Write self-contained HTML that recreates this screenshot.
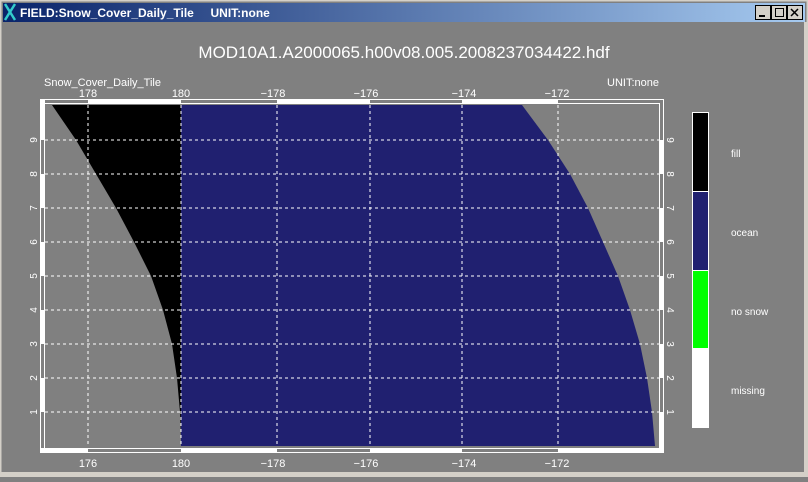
<!DOCTYPE html>
<html><head><style>
body{margin:0;width:808px;height:477px;overflow:hidden;background:#808080;font-family:"Liberation Sans",sans-serif}
</style></head><body>
<svg width="808" height="477" xmlns="http://www.w3.org/2000/svg" font-family="Liberation Sans, sans-serif">
<defs><linearGradient id="tb" x1="0" x2="1"><stop offset="0" stop-color="#0a246a"/><stop offset="1" stop-color="#a6caf0"/></linearGradient></defs>
<rect width="808" height="477" fill="#808080"/>
<rect x="0" y="0" width="808" height="477" fill="none" stroke="#d4d0c8" stroke-width="3"/>
<rect x="804" y="22" width="4" height="455" fill="#d4d0c8"/>
<rect x="0" y="472" width="808" height="5" fill="#d4d0c8"/>
<rect x="3" y="3" width="802" height="19" fill="url(#tb)"/>
<path d="M5 4 L15 20 M15 4 L5 20" stroke="#3cc" stroke-width="2.5"/>
<text x="20" y="17" fill="#fff" font-size="12" font-weight="bold">FIELD:Snow_Cover_Daily_Tile&#160;&#160;&#160;&#160;&#160;UNIT:none</text>
<g fill="#d4d0c8" stroke="#000" stroke-width="1"><rect x="755.5" y="5.5" width="15" height="14"/><rect x="771.5" y="5.5" width="15" height="14"/><rect x="787.5" y="5.5" width="15" height="14"/></g>
<path d="M759 16h6" stroke="#000" stroke-width="2"/><rect x="775.5" y="8.5" width="8" height="8" fill="none" stroke="#000"/><path d="M791 9l7 7M798 9l-7 7" stroke="#000" stroke-width="1.5"/>
<text x="404" y="58" fill="#fff" font-size="17" text-anchor="middle">MOD10A1.A2000065.h00v08.005.2008237034422.hdf</text>
<text x="44" y="86" fill="#fff" font-size="11">Snow_Cover_Daily_Tile</text>
<text x="659" y="86" fill="#fff" font-size="11" text-anchor="end">UNIT:none</text>
<g fill="#fff" font-size="11" text-anchor="middle">
<text x="88" y="97">178</text><text x="181" y="97">180</text><text x="273" y="97">−178</text><text x="366" y="97">−176</text><text x="464" y="97">−174</text><text x="557" y="97">−172</text>
<text x="88" y="467">176</text><text x="181" y="467">180</text><text x="273" y="467">−178</text><text x="366" y="467">−176</text><text x="464" y="467">−174</text><text x="557" y="467">−172</text>
</g>
<path d="M52 105 L181 105 L181 440 L180 412 L177 378 L172 344 L163 310 L151 276 L134 242 L116 208 L96 174 L76 140 Z" fill="#000"/>
<path d="M181 105 L522 105 L548 140 L570 174 L588 208 L603 242 L618 276 L630 310 L640 344 L647 378 L652 412 L655 446 L181 446 Z" fill="#202070"/>
<g stroke="#fff" stroke-dasharray="3,3" stroke-width="1">
<path d="M45 140H660M45 174H660M45 208H660M45 242H660M45 276H660M45 310H660M45 344H660M45 378H660M45 412H660"/>
<path d="M88 105V446M181 105V446M277 105V446M370 105V446M462 105V446M558 105V446"/>
</g>
<rect x="40.5" y="99.5" width="623" height="353" fill="none" stroke="#fff"/>
<rect x="44.5" y="103.5" width="615" height="345" fill="none" stroke="#fff"/>
<g fill="#fff">
<rect x="88" y="100" width="93" height="4"/><rect x="277" y="100" width="93" height="4"/><rect x="462" y="100" width="96" height="4"/>
<rect x="41" y="448" width="47" height="4"/><rect x="181" y="448" width="96" height="4"/><rect x="370" y="448" width="92" height="4"/><rect x="558" y="448" width="105" height="4"/>
<rect x="41" y="100" width="4" height="40"/><rect x="41" y="174" width="4" height="34"/><rect x="41" y="242" width="4" height="34"/><rect x="41" y="310" width="4" height="34"/><rect x="41" y="378" width="4" height="34"/>
<rect x="659" y="140" width="4" height="34"/><rect x="659" y="208" width="4" height="34"/><rect x="659" y="276" width="4" height="34"/><rect x="659" y="344" width="4" height="34"/><rect x="659" y="412" width="4" height="40"/>
</g>
<g fill="#fff" font-size="10" text-anchor="middle">
<text transform="translate(37,412) rotate(-90)">1</text><text transform="translate(37,378) rotate(-90)">2</text><text transform="translate(37,344) rotate(-90)">3</text><text transform="translate(37,310) rotate(-90)">4</text><text transform="translate(37,276) rotate(-90)">5</text><text transform="translate(37,242) rotate(-90)">6</text><text transform="translate(37,208) rotate(-90)">7</text><text transform="translate(37,174) rotate(-90)">8</text><text transform="translate(37,140) rotate(-90)">9</text>
<text transform="translate(667,412) rotate(90)">1</text><text transform="translate(667,378) rotate(90)">2</text><text transform="translate(667,344) rotate(90)">3</text><text transform="translate(667,310) rotate(90)">4</text><text transform="translate(667,276) rotate(90)">5</text><text transform="translate(667,242) rotate(90)">6</text><text transform="translate(667,208) rotate(90)">7</text><text transform="translate(667,174) rotate(90)">8</text><text transform="translate(667,140) rotate(90)">9</text>
</g>
<rect x="692.5" y="112.5" width="16" height="79" fill="#000" stroke="#fff"/>
<rect x="692.5" y="191.5" width="16" height="79" fill="#202070" stroke="#fff"/>
<rect x="692.5" y="270.5" width="16" height="78" fill="#00ff00" stroke="#fff"/>
<rect x="692" y="348" width="17" height="80" fill="#fff"/>
<g fill="#fff" font-size="10"><text x="731" y="157">fill</text><text x="731" y="236">ocean</text><text x="731" y="315">no snow</text><text x="731" y="394">missing</text></g>
</svg>
</body></html>
